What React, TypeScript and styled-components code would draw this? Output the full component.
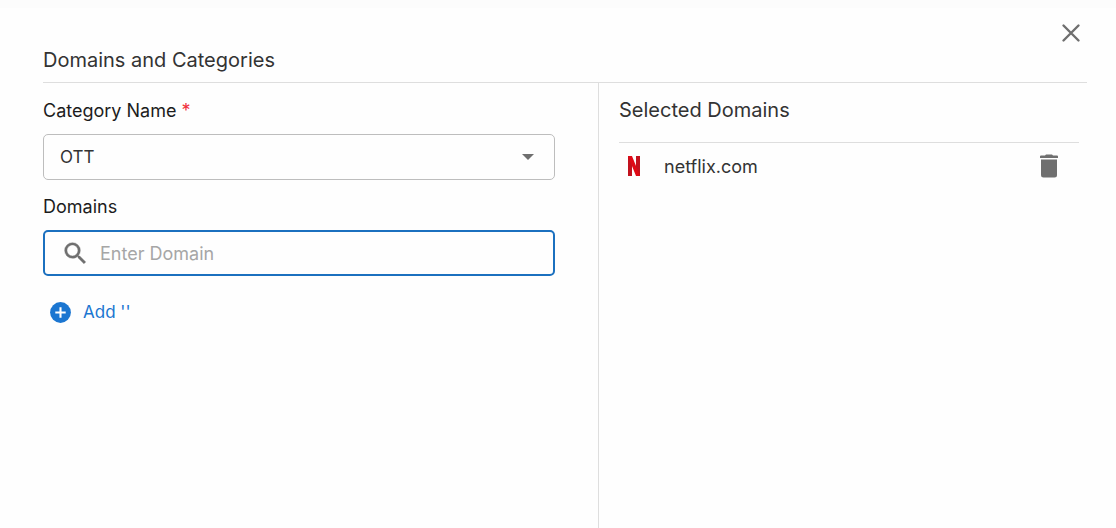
import React, { useState } from "react";
import styled, { createGlobalStyle } from "styled-components";

const GlobalStyle = createGlobalStyle`
  * { box-sizing: border-box; }
  body {
    margin: 0;
    background: #fefefe;
    color: #333333;
    font-family: Inter, "Liberation Sans", sans-serif;
  }
  button, input, select { font: inherit; }
`;

const Dialog = styled.main`
  display: flex;
  flex-direction: column;
  min-height: 100vh;
  padding: 0 29px 0 43px;
  border-top: 8px solid #fcfcfc;
`;

const TopBar = styled.div`
  display: flex;
  justify-content: flex-end;
  height: 37px;
  padding-top: 9px;
`;

const IconButton = styled.button`
  display: flex;
  align-items: center;
  justify-content: center;
  width: 32px;
  height: 32px;
  padding: 0;
  border: 0;
  background: none;
  color: #6f6f6f;
  cursor: pointer;
`;

const Header = styled.header`
  height: 38px;
  border-bottom: 1px solid #dedede;
`;

const Title = styled.h1`
  margin: 0;
  font-size: 20px;
  font-weight: 400;
  line-height: 30px;
`;

const Subtitle = styled(Title).attrs({ as: "h2" })``;

const Columns = styled.div`
  flex: 1;
  display: grid;
  grid-template-columns: 556fr 488fr;
`;

const FormPane = styled.form`
  padding: 14px 43px 0 0;
  border-right: 1px solid #dedede;
`;

const SelectedPane = styled.section`
  padding: 12px 8px 0 20px;
`;

const Label = styled.label`
  display: block;
  padding-bottom: 9px;
  color: #1c1c1c;
  font-size: 18px;
  line-height: 28px;
`;

const Required = styled.span`
  color: #f0303c;
`;

const Field = styled.div<{ $active?: boolean }>`
  display: flex;
  align-items: center;
  position: relative;
  height: 46px;
  margin-bottom: 13px;
  border: ${(p) => (p.$active ? "2px solid #1b70bf" : "1px solid #bdbdbd")};
  border-radius: 5px;
  color: #6f6f6f;
`;

const Select = styled.select`
  appearance: none;
  width: 100%;
  height: 100%;
  padding: 0 40px 0 16px;
  border: 0;
  outline: 0;
  background: transparent;
  color: #333333;
  font-size: 17px;
`;

const Caret = styled.svg`
  position: absolute;
  right: 20px;
  pointer-events: none;
`;

const Input = styled.input`
  flex: 1;
  min-width: 0;
  height: 100%;
  padding: 0 16px 0 10px;
  border: 0;
  outline: 0;
  background: transparent;
  color: #333333;
  font-size: 18px;
  &::placeholder { color: #a6a6a6; opacity: 1; }
`;

const SearchIcon = styled.svg`
  flex: none;
  margin-left: 16px;
`;

const AddButton = styled.button`
  display: flex;
  align-items: center;
  gap: 10px;
  height: 28px;
  margin-top: 22px;
  padding: 0 5px;
  border: 0;
  background: none;
  color: #1b76d1;
  font-size: 17px;
  cursor: pointer;
`;

const DomainList = styled.ul`
  margin: 17px 0 0;
  padding: 0;
  border-top: 1px solid #dedede;
  list-style: none;
`;

const DomainRow = styled.li`
  display: flex;
  align-items: center;
  height: 46px;
  padding: 0 14px 0 8px;
  font-size: 18px;
`;

const DomainName = styled.span`
  flex: 1;
  padding-left: 23px;
`;

const Netflix = () => (
  <svg width="14" height="22" viewBox="0 0 14 22" aria-hidden="true">
    <path d="M1 1H5V21H1Z" fill="#c2121e" />
    <path d="M9 1H13V21H9Z" fill="#c2121e" />
    <path d="M1 1H5L13 21H9Z" fill="#e00a16" />
  </svg>
);

export default function App() {
  const [domain, setDomain] = useState("");
  const [domains, setDomains] = useState(["netflix.com"]);

  const add = () => {
    if (domain) {
      setDomains([...domains, domain]);
      setDomain("");
    }
  };

  return (
    <>
      <GlobalStyle />
      <Dialog>
        <TopBar>
          <IconButton type="button" aria-label="Close">
            <svg width="20" height="20" viewBox="0 0 20 20" fill="none" stroke="currentColor" strokeWidth="2.4" strokeLinecap="round">
              <path d="M2.500 2.500L17.500 17.500M17.500 2.500L2.500 17.500" />
            </svg>
          </IconButton>
        </TopBar>
        <Header>
          <Title>Domains and Categories</Title>
        </Header>
        <Columns>
          <FormPane onSubmit={(e) => e.preventDefault()}>
            <Label htmlFor="category">
              Category Name <Required>*</Required>
            </Label>
            <Field>
              <Select id="category" defaultValue="OTT">
                <option>OTT</option>
              </Select>
              <Caret width="12" height="6" viewBox="0 0 12 6" aria-hidden="true">
                <path d="M0 0H12L6 6Z" fill="currentColor" />
              </Caret>
            </Field>
            <Label htmlFor="domain">Domains</Label>
            <Field $active>
              <SearchIcon width="29" height="29" viewBox="0 0 24 24" fill="currentColor" stroke="currentColor" strokeWidth="0.3" aria-hidden="true">
                <path d="M15.500 14h-.79l-.28-.27A6.470 6.470 0 0 0 16 9.500 6.500 6.500 0 1 0 9.500 16c1.610 0 3.090-.59 4.230-1.570l.27.28v.79l5 4.990L20.490 19l-4.990-5zm-6 0C7.010 14 5 11.990 5 9.500S7.010 5 9.500 5 14 7.010 14 9.500 11.990 14 9.500 14z" />
              </SearchIcon>
              <Input
                id="domain"
                placeholder="Enter Domain"
                value={domain}
                onChange={(e) => setDomain(e.target.value)}
              />
            </Field>
            <AddButton type="button" onClick={add}>
              <svg width="25" height="25" viewBox="0 0 24 24" aria-hidden="true">
                <circle cx="12" cy="12" r="10" fill="#1b76d1" />
                <path d="M12 7V17M7 12H17" stroke="#ffffff" strokeWidth="2" />
              </svg>
              <span>Add '{domain}'</span>
            </AddButton>
          </FormPane>
          <SelectedPane>
            <Subtitle>Selected Domains</Subtitle>
            <DomainList>
              {domains.map((name) => (
                <DomainRow key={name}>
                  <Netflix />
                  <DomainName>{name}</DomainName>
                  <IconButton
                    type="button"
                    aria-label={`Remove ${name}`}
                    onClick={() => setDomains(domains.filter((d) => d !== name))}
                  >
                    <svg width="18" height="24" viewBox="0 0 18 24" fill="currentColor">
                      <path d="M0 2.500Q0 1.500 1 1.500H5L6 .5H12L13 1.500H17Q18 1.500 18 2.500V4H0Z" />
                      <path d="M1 5.500H17V21Q17 23.500 14.500 23.500H3.500Q1 23.500 1 21Z" />
                    </svg>
                  </IconButton>
                </DomainRow>
              ))}
            </DomainList>
          </SelectedPane>
        </Columns>
      </Dialog>
    </>
  );
}
